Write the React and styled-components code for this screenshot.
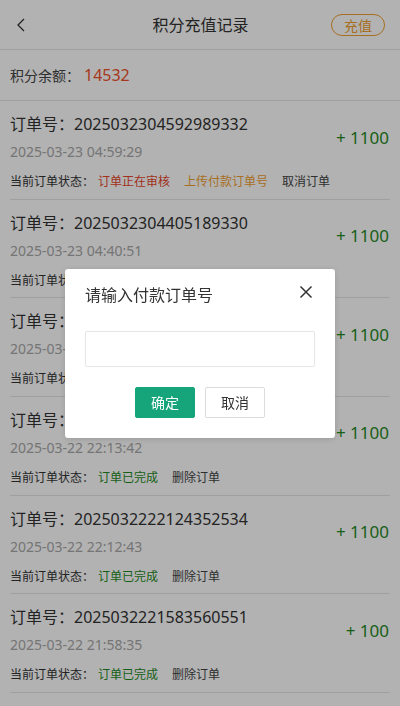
import React from 'react';
import styled, { createGlobalStyle } from 'styled-components';

const GlobalStyle = createGlobalStyle`
    html, body {
        margin: 0;
        padding: 0;
        background: #fff;
        font-family: "Noto Sans", "Noto Sans CJK SC", sans-serif;
        color: #333;
    }
    * { box-sizing: border-box; }
`;

const Page = styled.div`
    width: 400px;
    min-height: 706px;
    background: #fff;
`;

const Header = styled.div`
    height: 50px;
    display: flex;
    align-items: center;
    justify-content: space-between;
    padding: 0 15px 0 16px;
    border-bottom: 1px solid #e4e4e4;
`;

const BackButton = styled.div`
    width: 54px;
    display: flex;
    align-items: center;
    padding-top: 1px;
`;

const Title = styled.div`
    font-size: 16px;
    color: #333;
    line-height: 24px;
`;

const ChargeButton = styled.div`
    width: 54px;
    height: 22px;
    border: 1px solid #f0a030;
    border-radius: 11px;
    color: #f0a030;
    font-size: 14px;
    display: flex;
    align-items: center;
    justify-content: center;
    margin-top: 1px;
`;

const Balance = styled.div`
    height: 51px;
    display: flex;
    align-items: center;
    padding: 0 10px;
    border-bottom: 1px solid #e4e4e4;
    font-size: 14px;
    color: #444;
`;

const BalanceValue = styled.span`
    font-size: 16px;
    color: #f0502a;
    margin-left: 4px;
`;

const List = styled.div`
    padding: 0 10px;
`;

const Item = styled.div`
    padding: 10px 0 6.67px;
    border-bottom: 1px solid #e4e4e4;
`;

const Top = styled.div`
    display: flex;
    align-items: center;
    justify-content: space-between;
`;

const Info = styled.div`
    display: flex;
    flex-direction: column;
`;

const OrderNo = styled.div`
    font-size: 16px;
    line-height: 26px;
    color: #333;
`;

const DateText = styled.div`
    font-size: 14px;
    line-height: 22px;
    margin-top: 4px;
    color: #a8a8a8;
`;

const Amount = styled.div`
    font-size: 17px;
    color: #1f8a1f;
    padding-right: 1px;
`;

const StatusRow = styled.div`
    display: flex;
    align-items: center;
    margin-top: 9px;
    font-size: 12px;
    line-height: 20px;
    color: #333;
`;

const StatusText = styled.span`
    margin-left: ${p => (p.first ? '4px' : '14px')};
    color: ${p => p.color || '#444'};
`;

const Overlay = styled.div`
    position: fixed;
    inset: 0;
    background: rgba(0, 0, 0, 0.3);
    display: flex;
    align-items: center;
    justify-content: center;
`;

const Modal = styled.div`
    position: relative;
    width: 270px;
    background: #fff;
    border-radius: 3px;
    padding: 14px 20px 20px;
    box-shadow: 0 1px 6px rgba(0, 0, 0, 0.15);
`;

const ModalTitle = styled.div`
    font-size: 16px;
    line-height: 24px;
    color: #333;
`;

const CloseButton = styled.div`
    position: absolute;
    top: 16px;
    right: 22px;
    width: 14px;
    height: 14px;
    display: flex;
`;

const Input = styled.input`
    display: block;
    width: 230px;
    height: 36px;
    margin-top: 24px;
    border: 1px solid #e6e6e6;
    border-radius: 2px;
    outline: none;
    padding: 0 10px;
    font-size: 14px;
`;

const Buttons = styled.div`
    display: flex;
    justify-content: center;
    gap: 10px;
    margin-top: 20px;
`;

const Button = styled.div`
    width: 60px;
    height: 31px;
    border-radius: 2px;
    display: flex;
    align-items: center;
    justify-content: center;
    font-size: 14px;
    background: ${p => (p.primary ? '#16a57b' : '#fff')};
    color: ${p => (p.primary ? '#fff' : '#333')};
    border: 1px solid ${p => (p.primary ? '#16a57b' : '#dcdcdc')};
`;

const RED = '#e8452a';
const ORANGE = '#f0a030';
const GREEN = '#1f8a1f';

const orders = [
    { no: '2025032304592989332', date: '2025-03-23 04:59:29', amount: '+ 1100', done: false },
    { no: '2025032304405189330', date: '2025-03-23 04:40:51', amount: '+ 1100', done: false },
    { no: '2025032304301589327', date: '2025-03-23 04:30:15', amount: '+ 1100', done: false },
    { no: '2025032222134264419', date: '2025-03-22 22:13:42', amount: '+ 1100', done: true },
    { no: '2025032222124352534', date: '2025-03-22 22:12:43', amount: '+ 1100', done: true },
    { no: '2025032221583560551', date: '2025-03-22 21:58:35', amount: '+ 100', done: true },
];

const App = () => {
    return (
        <Page>
            <GlobalStyle />
            <Header>
                <BackButton>
                    <svg width="10" height="14" viewBox="0 0 10 14">
                        <path d="M8 1 L2 7 L8 13" fill="none" stroke="#333" strokeWidth="1.3" />
                    </svg>
                </BackButton>
                <Title>积分充值记录</Title>
                <ChargeButton>充值</ChargeButton>
            </Header>
            <Balance>
                积分余额：<BalanceValue>14532</BalanceValue>
            </Balance>
            <List>
                {orders.map(order => (
                    <Item key={order.no}>
                        <Top>
                            <Info>
                                <OrderNo>订单号：{order.no}</OrderNo>
                                <DateText>{order.date}</DateText>
                            </Info>
                            <Amount>{order.amount}</Amount>
                        </Top>
                        <StatusRow>
                            当前订单状态：
                            {order.done ? (
                                <>
                                    <StatusText first color={GREEN}>订单已完成</StatusText>
                                    <StatusText>删除订单</StatusText>
                                </>
                            ) : (
                                <>
                                    <StatusText first color={RED}>订单正在审核</StatusText>
                                    <StatusText color={ORANGE}>上传付款订单号</StatusText>
                                    <StatusText>取消订单</StatusText>
                                </>
                            )}
                        </StatusRow>
                    </Item>
                ))}
            </List>
            <Overlay>
                <Modal>
                    <ModalTitle>请输入付款订单号</ModalTitle>
                    <CloseButton>
                        <svg width="14" height="14" viewBox="0 0 14 14">
                            <path d="M1.5 1.5 L12.5 12.5 M12.5 1.5 L1.5 12.5" stroke="#333" strokeWidth="1.5" />
                        </svg>
                    </CloseButton>
                    <Input />
                    <Buttons>
                        <Button primary>确定</Button>
                        <Button>取消</Button>
                    </Buttons>
                </Modal>
            </Overlay>
        </Page>
    );
};

export default App;
